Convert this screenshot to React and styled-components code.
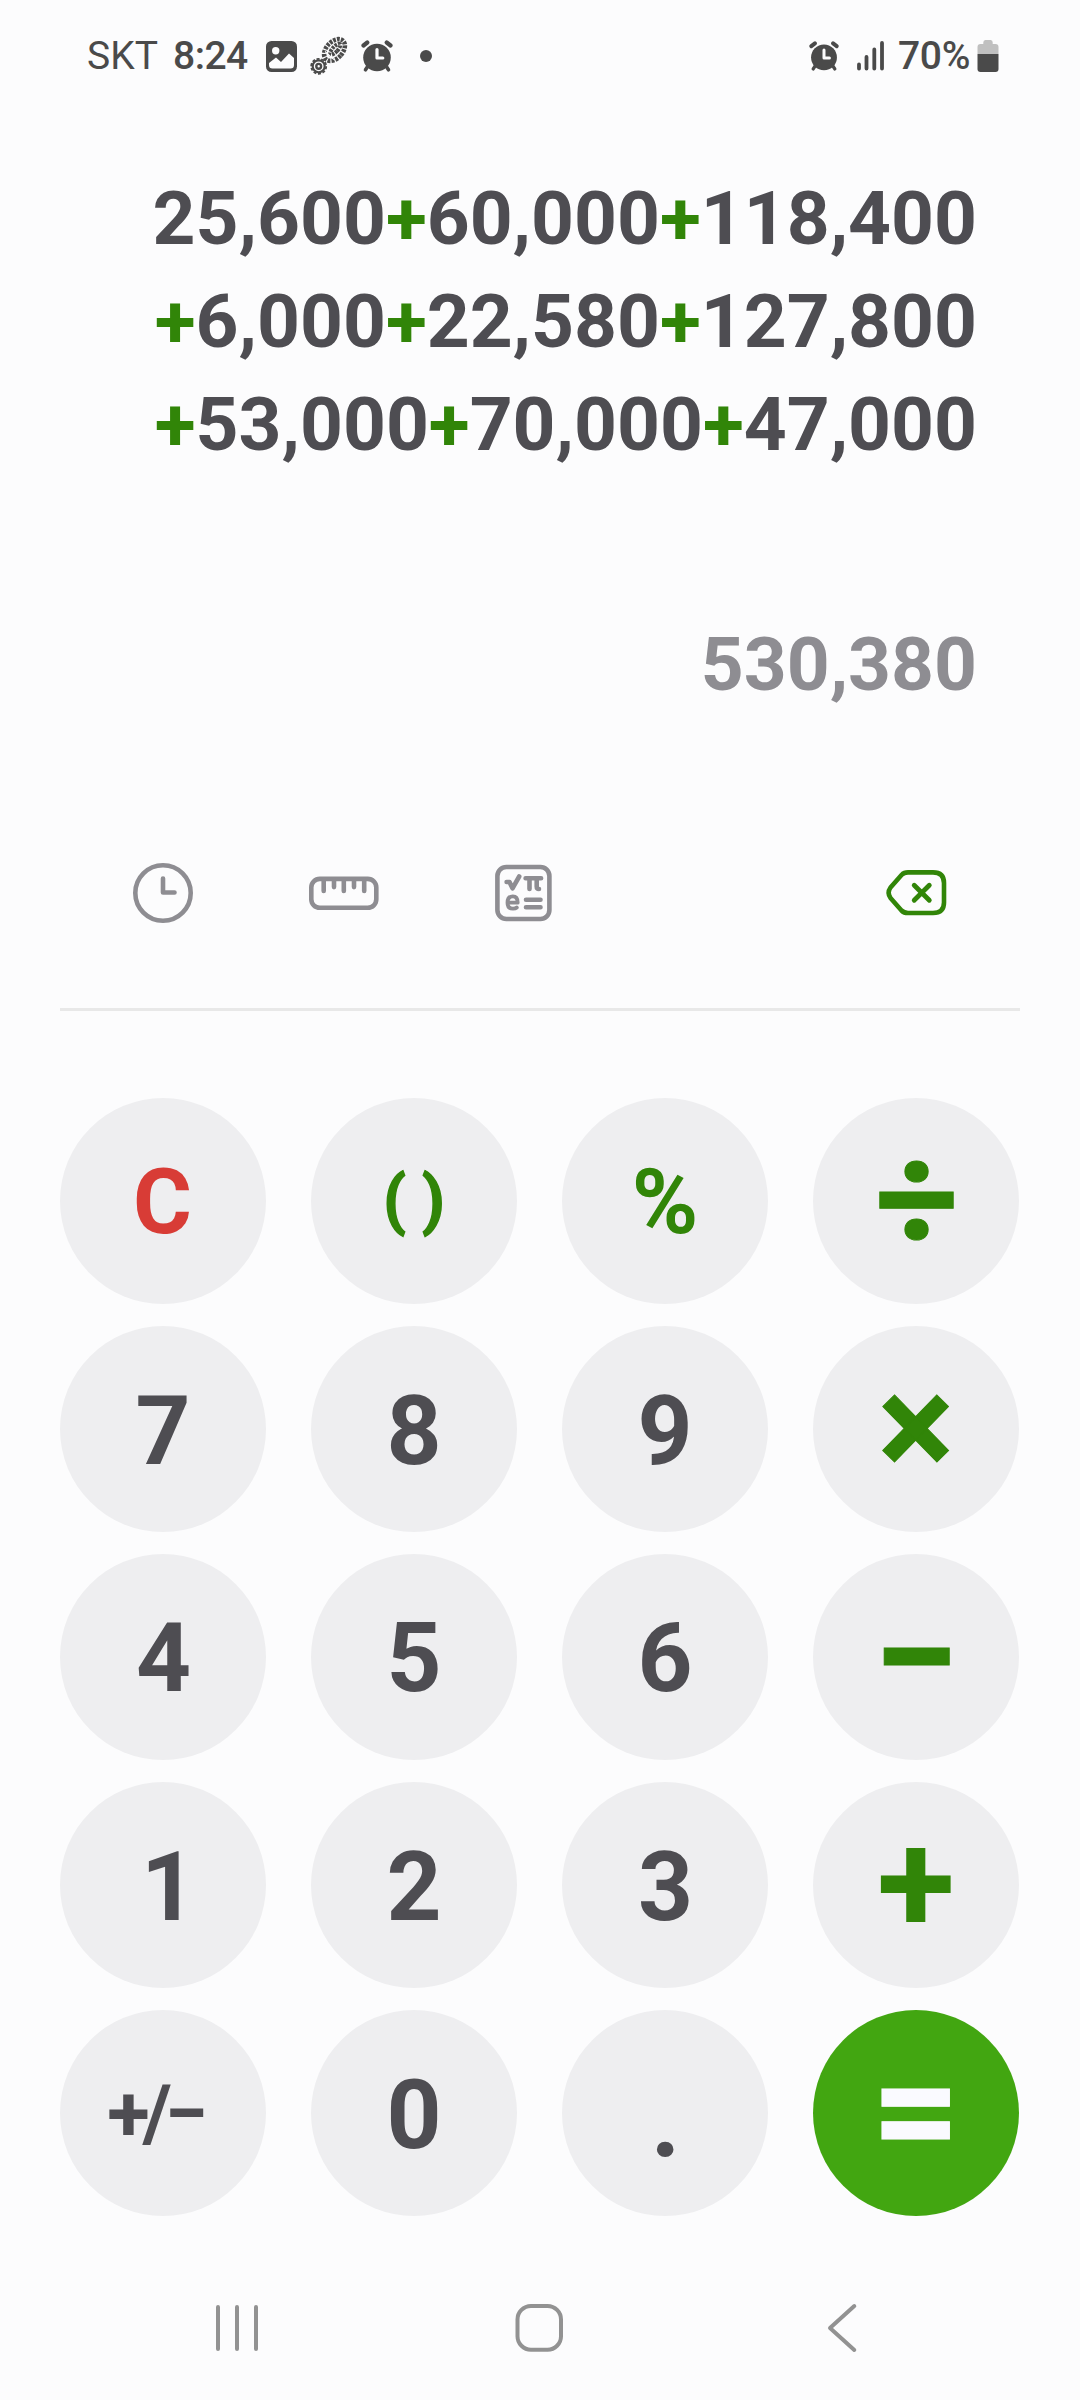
import React from 'react';
import styled, { createGlobalStyle } from 'styled-components';

const GlobalStyle = createGlobalStyle`
    * {
        box-sizing: border-box;
    }

    body {
        margin: 0;
        background-color: #fcfcfd;
        font-family: Roboto, 'Liberation Sans', sans-serif;
    }
`;

const Screen = styled.div`
    display: flex;
    flex-direction: column;
    width: 1080px;
    height: 2400px;
    overflow: hidden;
    background-color: #fcfcfd;
`;

const StatusBar = styled.header`
    display: flex;
    justify-content: space-between;
    height: 112px;
    padding: 0 81px 0 87px;
    color: #4a4a4a;
    font-size: 39px;
    font-weight: 500;
    line-height: 114px;
`;

const StatusGroup = styled.div`
    display: flex;
    align-items: center;
    height: 112px;
`;

const Carrier = styled.span`
    width: 86px;
    font-weight: 400;
`;

const Clock = styled.span`
    width: 93px;
    letter-spacing: -0.5px;
`;

const BatteryLevel = styled.span`
    width: 79px;
    letter-spacing: -0.3px;
`;

const StatusIcon = styled.svg`
    display: block;
    width: ${props => props.$width}px;
    height: 40px;
    margin-right: ${props => props.$gap || 0}px;
`;

const Display = styled.section`
    height: 696px;
    padding: 55px 103px 0 103px;
    color: #4e4d52;
    font-size: 74.9px;
    font-weight: 700;
    line-height: 103px;
    text-align: right;
`;

const Expression = styled.div`
    height: 446px;
    white-space: nowrap;
`;

const Operator = styled.span`
    color: #318508;
`;

const Result = styled.div`
    color: #8e8d92;
`;

const Toolbar = styled.div`
    display: flex;
    justify-content: space-between;
    height: 170px;
    padding: 0 74px 0 73px;
`;

const Tools = styled.div`
    display: flex;
`;

const ToolButton = styled.button`
    display: flex;
    justify-content: center;
    width: 180px;
    height: 170px;
    padding: 0;
    border: none;
    background: none;
    color: ${props => props.$accent ? '#318508' : '#8e8d92'};
    cursor: pointer;
`;

const ToolIcon = styled.svg`
    width: 80px;
    height: 170px;
    fill: none;
    stroke: currentColor;
    stroke-width: 4.6;
    stroke-linecap: round;
    stroke-linejoin: round;
`;

const Divider = styled.hr`
    width: 960px;
    height: 3px;
    margin: 30px auto 87px;
    border: none;
    background-color: #e8e8e8;
`;

const Keypad = styled.main`
    display: grid;
    grid-template-columns: repeat(4, 206px);
    grid-auto-rows: 206px;
    gap: 22px 45px;
    padding: 0 60px;
`;

const keyColors = {
    number: '#4e4d52',
    clear: '#d83c36',
    operator: '#318508',
    equals: '#fafaff',
};

const Key = styled.button`
    display: flex;
    align-items: center;
    justify-content: center;
    padding: ${props => props.$pad || '3px 0 0'};
    border: none;
    border-radius: 50%;
    background-color: ${props => props.$kind === 'equals' ? '#42a611' : '#eeeef0'};
    color: ${props => keyColors[props.$kind]};
    font-family: inherit;
    font-size: ${props => props.$size || 96}px;
    font-weight: 700;
    line-height: 1;
    letter-spacing: ${props => props.$tracking || 0}px;
    white-space: pre;
    -webkit-text-stroke: ${props => props.$stroke || 0}px currentColor;
    cursor: pointer;
`;

const NavBar = styled.nav`
    display: flex;
    justify-content: center;
    margin-top: 60px;
    height: 104px;
    padding-right: 1px;
`;

const NavButton = styled.button`
    width: 303px;
    height: 104px;
    padding: 0;
    border: none;
    background: none;
    cursor: pointer;
`;

const NavIcon = styled.svg`
    display: block;
    width: 60px;
    height: 104px;
    margin: 0 auto;
    fill: none;
    stroke: #929292;
    stroke-width: 4;
    stroke-linecap: round;
    stroke-linejoin: round;
`;

const lines = ['25,600+60,000+118,400', '+6,000+22,580+127,800', '+53,000+70,000+47,000'];

const keys = [
    { label: 'C', kind: 'clear', size: 90, pad: '3px 1px 0 0' },
    { label: '( )', kind: 'operator', size: 65, pad: '0 0 2px', stroke: 1.4 },
    { label: '%', kind: 'operator', size: 90 },
    { label: '÷', kind: 'operator', size: 146, pad: '0 0 3px 2px', stroke: 1 },
    { label: '7', kind: 'number' },
    { label: '8', kind: 'number' },
    { label: '9', kind: 'number' },
    { label: '×', kind: 'operator', size: 142, pad: '0 0 2px', stroke: 1 },
    { label: '4', kind: 'number', pad: '2px 0 0 1px' },
    { label: '5', kind: 'number', pad: '2px 0 0' },
    { label: '6', kind: 'number', pad: '2px 0 0' },
    { label: '−', kind: 'operator', size: 154, pad: '2px 0 0', stroke: 1 },
    { label: '1', kind: 'number', pad: '3px 0 0 11px' },
    { label: '2', kind: 'number' },
    { label: '3', kind: 'number', pad: '3px 0 0 1px' },
    { label: '+', kind: 'operator', size: 143, pad: '0 0 3px' },
    { label: '+/−', kind: 'number', size: 78, tracking: -7, pad: '2px 18px 0 0' },
    { label: '0', kind: 'number' },
    { label: '.', kind: 'number', size: 104, pad: '16px 0 0 1px' },
    { label: '=', kind: 'equals', size: 154, pad: '0 0 5px', stroke: 1 },
];

const AlarmIcon = ({ width, gap }) => (
    <StatusIcon viewBox="0 0 32 40" $width={width} $gap={gap}>
        <circle cx="16" cy="21.5" r="13.8" fill="#4a4a4a" />
        <g fill="none" stroke="#4a4a4a" strokeWidth="4.2" strokeLinecap="round">
            <path d="M2.5 9.5 L6.3 6.5 M29.5 9.5 L25.7 6.5" />
            <path d="M7 30 L4.5 33.8 M25 30 L27.5 33.8" strokeWidth="3.6" />
        </g>
        <path d="M16 13.5 V22 H21.8" fill="none" stroke="#fcfcfd" strokeWidth="3.2" strokeLinecap="round" strokeLinejoin="round" />
    </StatusIcon>
);

const ShoeIcon = () => (
    <StatusIcon viewBox="0 0 40 40" $width={40} $gap={12}>
        <g transform="rotate(42 25.5 14)" fill="none" stroke="#4a4a4a">
            <ellipse cx="25.5" cy="14" rx="8.2" ry="12.6" strokeWidth="4.6" strokeDasharray="2.8 1.1" />
            <ellipse cx="25.5" cy="13" rx="2.6" ry="7" strokeWidth="4" strokeDasharray="2.6 1" />
            <path d="M19.5 21.5 H31.5" stroke="#fcfcfd" strokeWidth="1.2" />
        </g>
        <circle cx="9.7" cy="30.3" r="6" fill="none" stroke="#4a4a4a" strokeWidth="2.2" />
        <circle cx="9.7" cy="30.3" r="7.5" fill="none" stroke="#4a4a4a" strokeWidth="1.8" strokeDasharray="3 1.71" />
        <circle cx="9.7" cy="30.3" r="2.4" fill="none" stroke="#4a4a4a" strokeWidth="2.4" />
    </StatusIcon>
);

const App = () => {
    return (
        <Screen>
            <GlobalStyle />
            <StatusBar>
                <StatusGroup>
                    <Carrier>SKT</Carrier>
                    <Clock>8:24</Clock>
                    <StatusIcon viewBox="0 0 31 40" $width={31} $gap={12}>
                        <rect y="5" width="31" height="31" rx="5.5" fill="#4a4a4a" />
                        <circle cx="9.7" cy="14.8" r="3.7" fill="#fcfcfd" />
                        <path d="M3 27 L10 21.5 L15 26 L23 17.5 L28 22 V29 Q28 32.5 24.5 32.5 H6.5 Q3 32.5 3 29 Z" fill="#fcfcfd" />
                    </StatusIcon>
                    <ShoeIcon />
                    <AlarmIcon width={32} gap={26} />
                    <StatusIcon viewBox="0 0 14 40" $width={14}>
                        <circle cx="7" cy="20" r="6" fill="#4a4a4a" />
                    </StatusIcon>
                </StatusGroup>
                <StatusGroup>
                    <AlarmIcon width={30} gap={17} />
                    <StatusIcon viewBox="0 0 28 40" $width={28} $gap={14}>
                        <path d="M3 28.5 V32.5 M10.5 21 V32.5 M18.3 13.5 V32.5 M26 7 V32.5" stroke="#4a4a4a" strokeWidth="3.8" strokeLinecap="round" />
                    </StatusIcon>
                    <BatteryLevel>70%</BatteryLevel>
                    <StatusIcon viewBox="0 0 22 40" $width={22}>
                        <path d="M.5 18 V11 Q.5 8 3.5 8 H6.3 V6.5 Q6.3 4 8.3 4 H13.7 Q15.7 4 15.7 6.5 V8 H18.5 Q21.5 8 21.5 11 V18 Z" fill="#c0c0c0" />
                        <path d="M.5 18 H21.5 V33 Q21.5 36 18.5 36 H3.5 Q.5 36 .5 33 Z" fill="#4a4a4a" />
                    </StatusIcon>
                </StatusGroup>
            </StatusBar>

            <Display>
                <Expression>
                    {lines.map(line => (
                        <div key={line}>
                            {line.split(/(\+)/).map((part, i) => (
                                part === '+' ? <Operator key={i}>+</Operator> : part
                            ))}
                        </div>
                    ))}
                </Expression>
                <Result>530,380</Result>
            </Display>

            <Toolbar>
                <Tools>
                    <ToolButton aria-label="History">
                        <ToolIcon viewBox="0 0 80 170">
                            <circle cx="40" cy="85" r="27.7" />
                            <path d="M40 70.5 V84.5 H51.5" />
                        </ToolIcon>
                    </ToolButton>
                    <ToolButton aria-label="Unit converter">
                        <ToolIcon viewBox="0 0 80 170">
                            <rect x="8.3" y="70.9" width="65" height="28.9" rx="8.5" />
                            <path d="M20.7 72 V83 M31 72 V79.1 M40.8 72 V83 M51 72 V79.1 M61.2 72 V83" />
                        </ToolIcon>
                    </ToolButton>
                    <ToolButton aria-label="Scientific mode">
                        <ToolIcon viewBox="0 0 80 170">
                            <rect x="14.4" y="59" width="52" height="52" rx="9" />
                            <path d="M23.6 74 H26.5 L29.5 80.3 L36.2 68.5" />
                            <path d="M42.6 70.2 H58.1 M46.5 71 V81 M53.7 71 V78.5 Q53.7 81 56 81" />
                            <path d="M24.5 94.7 H34.7 Q34.7 88.3 29.8 88.3 Q24.5 88.3 24.5 94.8 Q24.5 100.7 30 100.7 Q32.5 100.7 33.8 99.5" strokeWidth="3.8" />
                            <path d="M43 91.7 H57.5 M43 99.2 H57.5" />
                        </ToolIcon>
                    </ToolButton>
                </Tools>
                <ToolButton $accent aria-label="Delete">
                    <ToolIcon viewBox="0 0 80 170">
                        <path d="M32 64.4 H57 Q68 64.4 68 75 V94.5 Q68 105 57 105 H32 Q28 105 25.5 102.5 L14.5 90 Q10.8 84.7 14.5 79.5 L25.5 67 Q28 64.4 32 64.4 Z" />
                        <path d="M38.2 77.2 L53.3 92.3 M53.3 77.2 L38.2 92.3" strokeWidth="4.8" />
                    </ToolIcon>
                </ToolButton>
            </Toolbar>

            <Divider />

            <Keypad>
                {keys.map(key => (
                    <Key
                        key={key.label}
                        $kind={key.kind}
                        $size={key.size}
                        $tracking={key.tracking}
                        $pad={key.pad}
                        $stroke={key.stroke}
                    >
                        {key.label}
                    </Key>
                ))}
            </Keypad>

            <NavBar>
                <NavButton aria-label="Recents">
                    <NavIcon viewBox="0 0 60 104">
                        <path d="M11 31 V73 M30 31 V73 M49 31 V73" />
                    </NavIcon>
                </NavButton>
                <NavButton aria-label="Home">
                    <NavIcon viewBox="0 0 60 104">
                        <rect x="7.5" y="30" width="43.5" height="43.7" rx="13.5" />
                    </NavIcon>
                </NavButton>
                <NavButton aria-label="Back">
                    <NavIcon viewBox="0 0 60 104">
                        <path d="M41.3 30 L17 52 L41.3 74" />
                    </NavIcon>
                </NavButton>
            </NavBar>
        </Screen>
    );
};

export default App;
